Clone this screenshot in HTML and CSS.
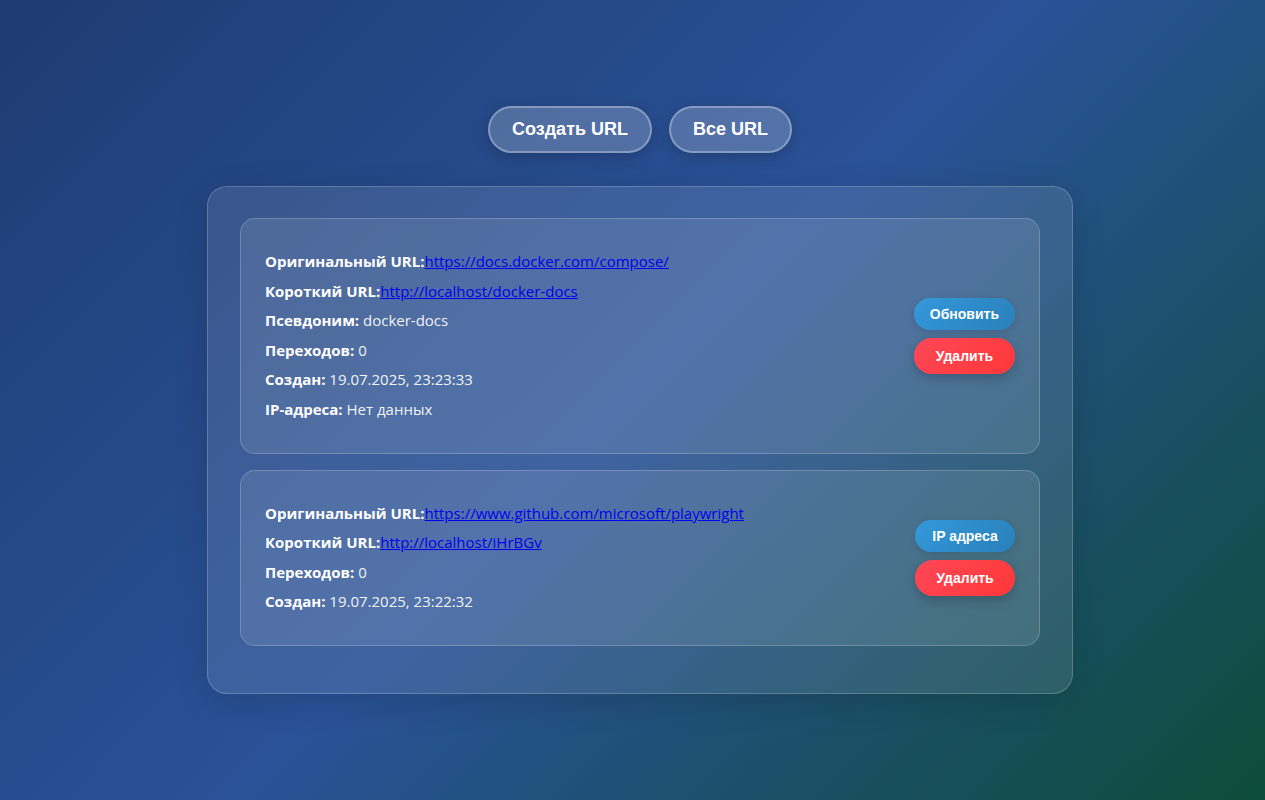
FILE: index.html
```html
<!DOCTYPE html>
<html lang="ru">
<head>
<meta charset="utf-8">
<title>URL Shortener</title>
<link rel="stylesheet" href="styles.css">
</head>
<body>
<div class="page">
  <nav class="nav">
    <button class="nav-btn">Создать URL</button>
    <button class="nav-btn">Все URL</button>
  </nav>
  <main class="panel">
    <div class="url-card">
      <div class="info">
        <p><strong>Оригинальный URL:</strong><a href="#">https://docs.docker.com/compose/</a></p>
        <p><strong>Короткий URL:</strong><a href="#">http://localhost/docker-docs</a></p>
        <p><strong>Псевдоним:</strong> docker-docs</p>
        <p><strong>Переходов:</strong> 0</p>
        <p><strong>Создан:</strong> 19.07.2025, 23:23:33</p>
        <p><strong>IP-адреса:</strong> Нет данных</p>
      </div>
      <div class="actions">
        <button class="btn btn-blue">Обновить</button>
        <button class="btn btn-red">Удалить</button>
      </div>
    </div>
    <div class="url-card">
      <div class="info">
        <p><strong>Оригинальный URL:</strong><a href="#">https://www.github.com/microsoft/playwright</a></p>
        <p><strong>Короткий URL:</strong><a href="#">http://localhost/iHrBGv</a></p>
        <p><strong>Переходов:</strong> 0</p>
        <p><strong>Создан:</strong> 19.07.2025, 23:22:32</p>
      </div>
      <div class="actions">
        <button class="btn btn-blue">IP адреса</button>
        <button class="btn btn-red">Удалить</button>
      </div>
    </div>
  </main>
</div>
</body>
</html>
```

FILE: styles.css
```css
html, body {
  margin: 0;
  padding: 0;
  height: 100%;
}
body {
  background: linear-gradient(135deg, #1e3c72 0%, #2a5298 50%, #0d4d3a 100%);
  font-family: "Open Sans", "Noto Sans", sans-serif;
  color: #fff;
  overflow: hidden;
}
.page {
  padding: 106px 0 0 15px;
  display: flex;
  flex-direction: column;
  align-items: center;
}
.nav {
  display: flex;
  gap: 17px;
  margin-bottom: 33px;
}
.nav-btn {
  font-family: "Liberation Sans", Arial, sans-serif;
  font-weight: bold;
  font-size: 18px;
  color: #fff;
  background: rgba(255, 255, 255, 0.2);
  border: 2px solid rgba(255, 255, 255, 0.3);
  border-radius: 25px;
  padding: 11px 22px;
  box-shadow: 0 4px 15px rgba(0, 0, 0, 0.2);
  cursor: pointer;
}
.panel {
  width: 800px;
  padding: 31px 32px;
  background: rgba(255, 255, 255, 0.1);
  border: 1px solid rgba(255, 255, 255, 0.2);
  border-radius: 20px;
  box-shadow: 0 8px 32px rgba(0, 0, 0, 0.15);
}
.url-card {
  display: flex;
  align-items: center;
  justify-content: space-between;
  padding: 24px;
  margin-bottom: 16px;
  background: rgba(255, 255, 255, 0.1);
  border: 1px solid rgba(255, 255, 255, 0.2);
  border-radius: 15px;
}
.info p {
  margin: 8px 0;
  font-size: 15px;
  line-height: 21.6px;
  color: rgba(255, 255, 255, 0.95);
}
.info strong {
  color: #fff;
  font-weight: 700;
}
.info a {
  color: #0000ee;
  text-decoration: underline;
}
.actions {
  display: flex;
  flex-direction: column;
  gap: 8px;
}
.btn {
  font-family: "Liberation Sans", Arial, sans-serif;
  font-weight: bold;
  font-size: 14px;
  color: #fff;
  border: none;
  border-radius: 20px;
  min-width: 100px;
  cursor: pointer;
}
.btn-blue {
  padding: 8px 16px;
  background: linear-gradient(135deg, #3498db, #2980b9);
  box-shadow: 0 2px 8px rgba(0, 0, 0, 0.12);
}
.btn-red {
  padding: 10px 16px;
  background: linear-gradient(135deg, #ff4757, #ff3838);
  box-shadow: 0 4px 12px rgba(0, 0, 0, 0.2);
}
```
